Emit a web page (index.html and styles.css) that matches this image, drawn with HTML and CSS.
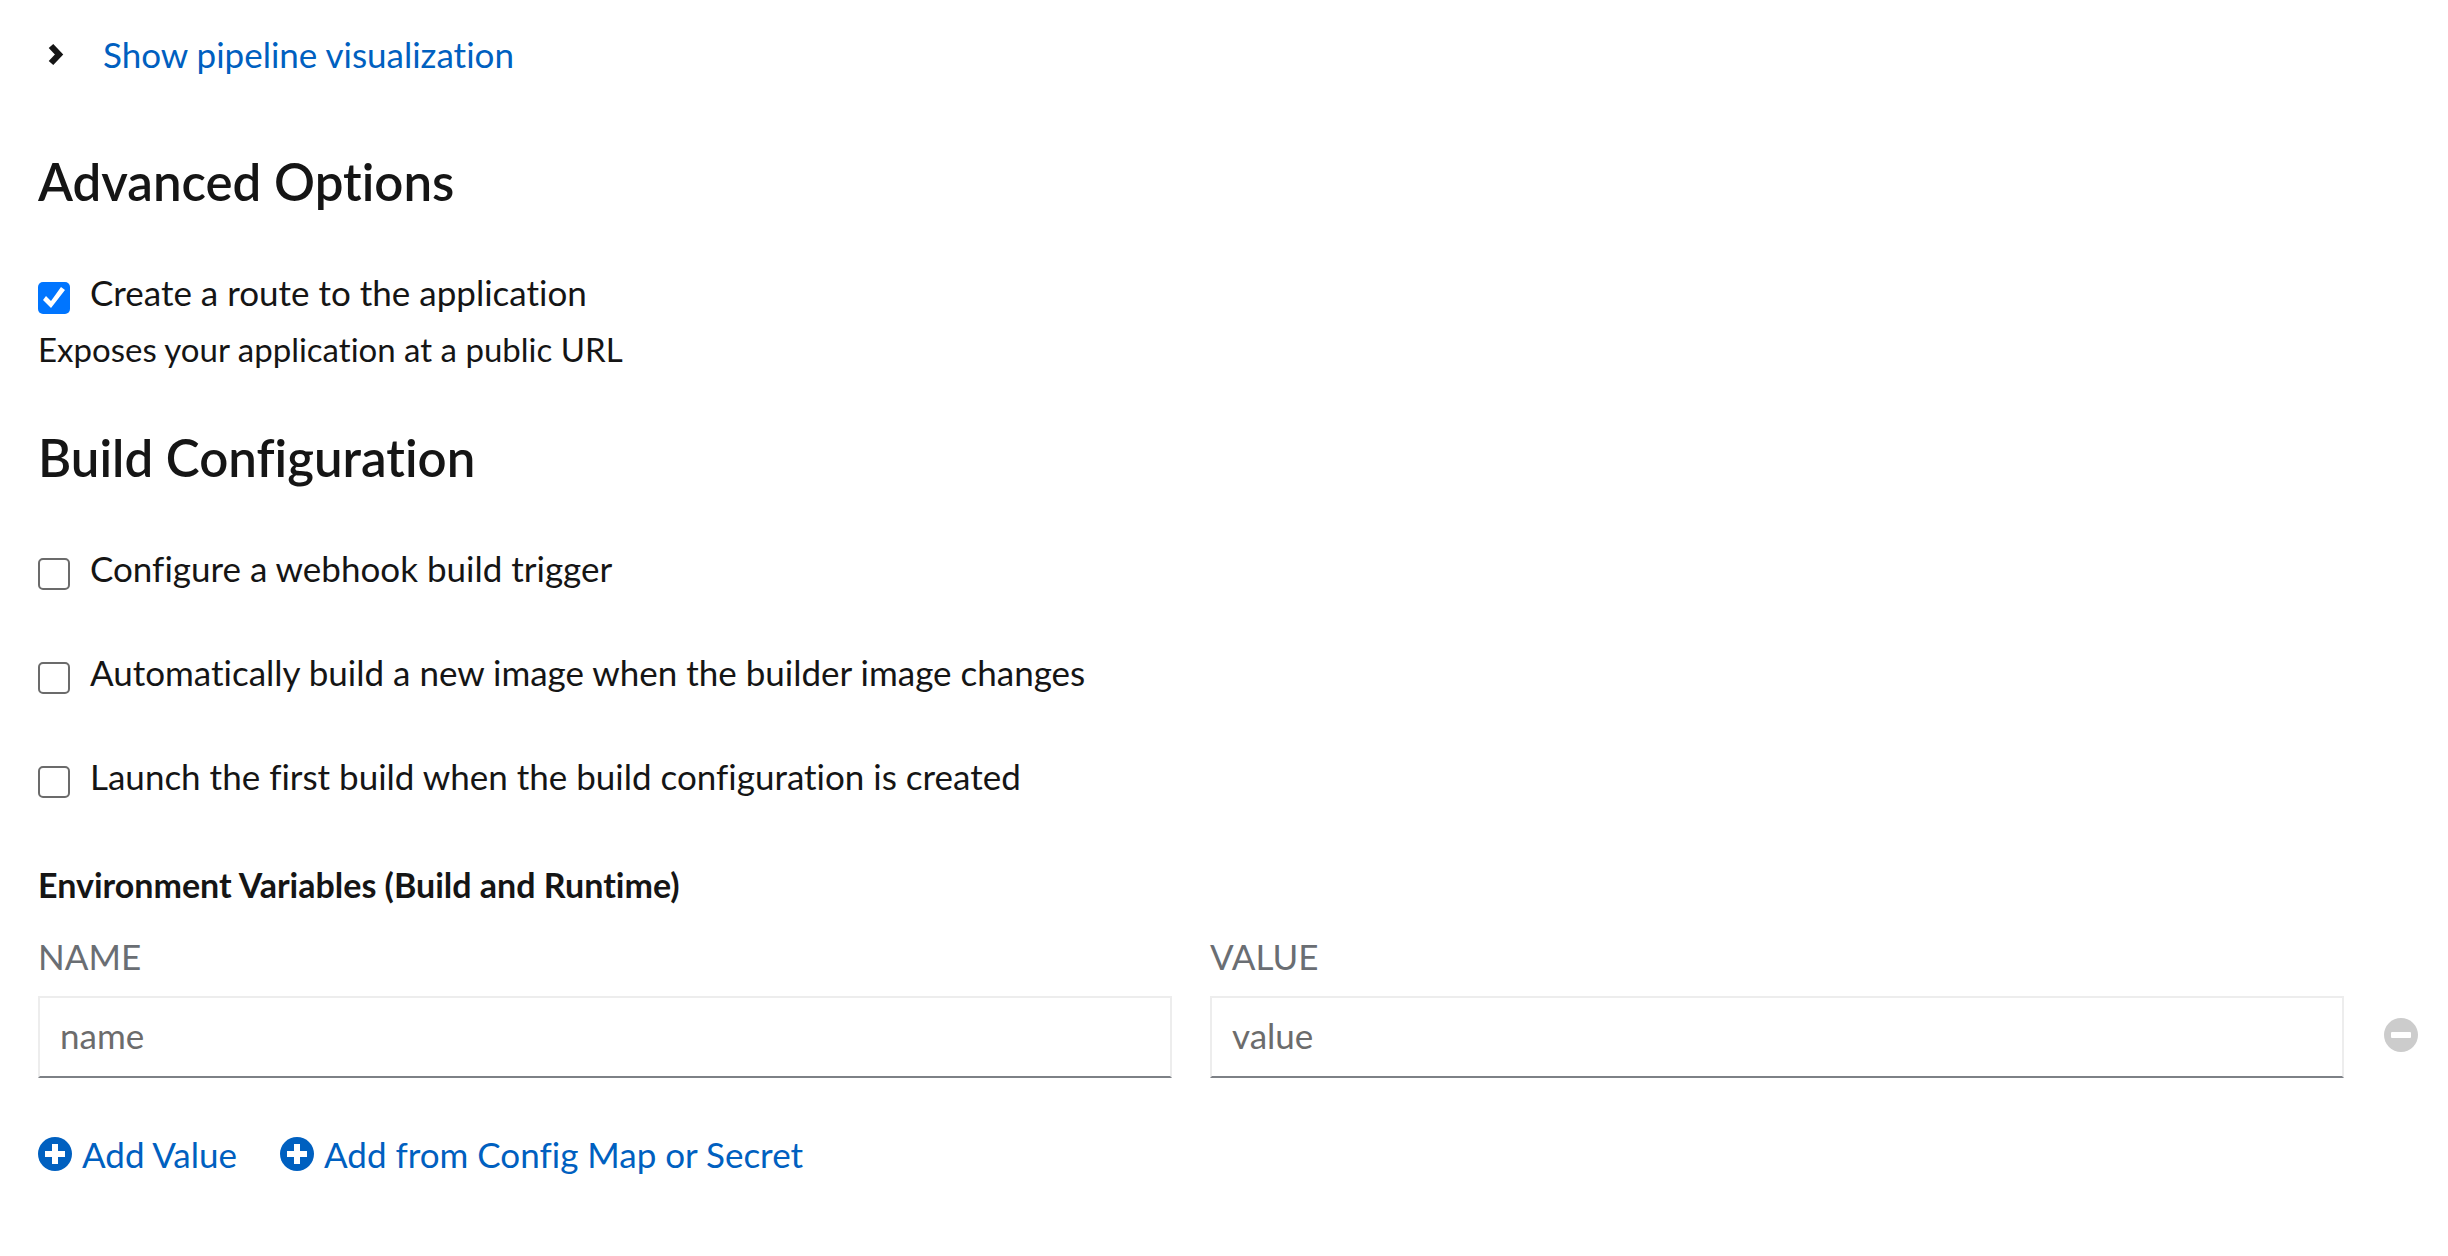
FILE: index.html
```html
<!DOCTYPE html>
<html lang="en">
<head>
<meta charset="utf-8">
<title>Advanced Options</title>
<link rel="stylesheet" href="styles.css">
</head>
<body>
<form class="form">
  <button type="button" class="toggle" aria-expanded="false">
    <svg class="toggle-icon" viewBox="0 0 16 24" aria-hidden="true"><path d="M3 4 11 12.5 3 21" fill="none" stroke="currentColor" stroke-width="6.2"/></svg>
    <span>Show pipeline visualization</span>
  </button>

  <section class="section">
    <h2 class="title">Advanced Options</h2>
    <div class="field">
      <div class="check">
        <input class="check-box" type="checkbox" id="route" aria-describedby="route-help" checked>
        <label for="route">Create a route to the application</label>
      </div>
      <p class="help" id="route-help">Exposes your application at a public URL</p>
    </div>
  </section>

  <section class="section">
    <h2 class="title">Build Configuration</h2>
    <div class="checks">
      <div class="check">
        <input class="check-box" type="checkbox" id="webhook">
        <label for="webhook">Configure a webhook build trigger</label>
      </div>
      <div class="check">
        <input class="check-box" type="checkbox" id="auto-build">
        <label for="auto-build">Automatically build a new image when the builder image changes</label>
      </div>
      <div class="check">
        <input class="check-box" type="checkbox" id="first-build">
        <label for="first-build">Launch the first build when the build configuration is created</label>
      </div>
    </div>
  </section>

  <section class="variables">
    <h3 class="subtitle">Environment Variables (Build and Runtime)</h3>
    <div class="pairs">
      <div class="pair-field">
        <label class="pair-label" for="env-name">NAME</label>
        <input class="text-input" type="text" id="env-name" placeholder="name">
      </div>
      <div class="pair-field">
        <label class="pair-label" for="env-value">VALUE</label>
        <input class="text-input" type="text" id="env-value" placeholder="value">
      </div>
      <button type="button" class="remove" aria-label="Remove variable" disabled>
        <svg class="icon" viewBox="0 0 34 34" aria-hidden="true"><circle cx="17" cy="17" r="17" fill="currentColor"/><rect x="7" y="14" width="20" height="6" rx="1" fill="#fff"/></svg>
      </button>
    </div>
    <div class="actions">
      <button type="button" class="link">
        <svg class="icon" viewBox="0 0 34 34" aria-hidden="true"><circle cx="17" cy="17" r="17" fill="currentColor"/><path d="M14 7h6v7h7v6h-7v7h-6v-7H7v-6h7z" fill="#fff"/></svg>
        <span>Add Value</span>
      </button>
      <button type="button" class="link">
        <svg class="icon" viewBox="0 0 34 34" aria-hidden="true"><circle cx="17" cy="17" r="17" fill="currentColor"/><path d="M14 7h6v7h7v6h-7v7h-6v-7H7v-6h7z" fill="#fff"/></svg>
        <span>Add from Config Map or Secret</span>
      </button>
    </div>
  </section>
</form>
</body>
</html>
```
FILE: styles.css
```css
* {
  box-sizing: border-box;
}

body {
  margin: 0;
  background: #fff;
  color: #151515;
  font: 400 35px/54px Lato, "Liberation Sans", sans-serif;
  font-variant-ligatures: none;
}

h2, h3, p {
  margin: 0;
}

button, input {
  font: inherit;
  font-variant-ligatures: none;
}

button {
  padding: 0;
  border: 0;
  background: none;
  color: #0060c0;
}

.form {
  padding: 27px 28px 27px 38px;
}

.toggle {
  display: flex;
  align-items: center;
  gap: 39px;
  padding-left: 10px;
}

.toggle-icon {
  width: 16px;
  height: 24px;
  color: #151515;
}

.section {
  margin-bottom: 55px;
}

.toggle + .section {
  margin-top: 71px;
}

.title {
  margin-bottom: 53px;
  font-size: 51px;
  font-weight: 600;
  line-height: 60px;
}

.check {
  display: flex;
  align-items: flex-start;
  gap: 20px;
}

.check-box {
  appearance: none;
  flex: none;
  width: 32px;
  height: 32px;
  margin: 17px 0 0;
  border: 2px solid #6b6b6b;
  border-radius: 5px;
  background: #fff;
}

.check-box:checked {
  border: 0;
  background: #0075ff;
}

.check-box:checked::before {
  content: "";
  display: block;
  height: 32px;
  background: #fff;
  clip-path: polygon(5px 18px, 8px 14px, 13px 19px, 23px 5px, 27px 8px, 13px 26px);
}

.checks {
  display: flex;
  flex-direction: column;
  gap: 50px;
}

.help {
  margin-top: 6px;
  font-size: 33px;
  line-height: 48px;
}

.subtitle {
  font-size: 34px;
  font-weight: 700;
}

.pairs {
  display: grid;
  grid-template-columns: 1fr 1fr 38px;
  column-gap: 38px;
  margin-top: 17px;
}

.pair-field {
  display: flex;
  flex-direction: column;
  gap: 13px;
}

.pair-label {
  color: #6a6e73;
}

.text-input {
  width: 100%;
  height: 82px;
  padding: 0 20px 4px;
  border: 2px solid #ededed;
  border-bottom-color: #7d8186;
  border-radius: 0;
  background: #fff;
  color: #151515;
}

.text-input::placeholder {
  color: #6c6c6c;
  opacity: 1;
}

.remove {
  display: flex;
  align-items: center;
  justify-content: center;
  align-self: end;
  height: 82px;
  padding-bottom: 4px;
  color: #ccc;
}

.icon {
  flex: none;
  width: 34px;
  height: 34px;
}

.actions {
  display: flex;
  flex-wrap: wrap;
  gap: 43px;
  margin-top: 49px;
}

.link {
  display: flex;
  align-items: center;
  gap: 10px;
}
```
